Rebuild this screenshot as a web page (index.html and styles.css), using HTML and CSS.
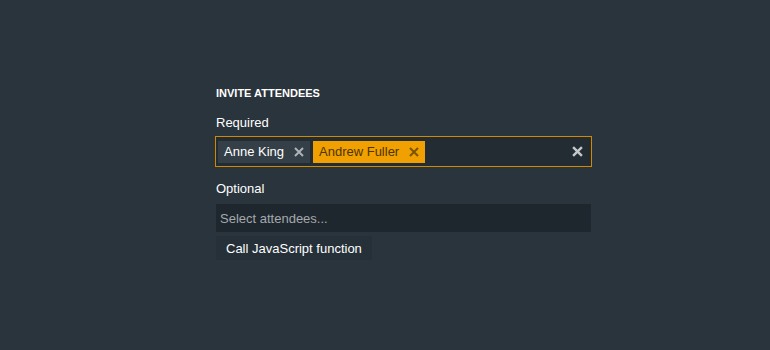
FILE: index.html
```html
<!DOCTYPE html>
<html>
<head>
<meta charset="utf-8">
<link rel="stylesheet" href="styles.css">
</head>
<body>
<div class="panel">
  <div class="title">INVITE ATTENDEES</div>
  <div class="label label-required">Required</div>
  <div class="multi multi-focused">
    <span class="chip">Anne King<svg class="chip-x" viewBox="0 0 10 10" width="10" height="10"><path d="M1 1L9 9M9 1L1 9"/></svg></span>
    <span class="chip chip-active">Andrew Fuller<svg class="chip-x" viewBox="0 0 10 10" width="10" height="10"><path d="M1 1L9 9M9 1L1 9"/></svg></span>
    <span class="spacer"></span>
    <svg class="clear" viewBox="0 0 10 10" width="11" height="11"><path d="M1 1L9 9M9 1L1 9"/></svg>
  </div>
  <div class="label label-optional">Optional</div>
  <div class="multi multi-empty">
    <span class="placeholder">Select attendees...</span>
  </div>
  <button class="btn">Call JavaScript function</button>
</div>
</body>
</html>
```

FILE: styles.css
```css
html, body {
  margin: 0;
  padding: 0;
  background: #2a343c;
  width: 770px;
  height: 350px;
  overflow: hidden;
  font-family: "Liberation Sans", Arial, sans-serif;
}
.panel {
  width: 377px;
  margin: 0 0 0 215px;
  padding-top: 87px;
  display: flex;
  flex-direction: column;
  align-items: flex-start;
}
.title {
  font-size: 11px;
  font-weight: bold;
  color: #ffffff;
  margin-left: 1px;
  line-height: 13px;
}
.label {
  font-size: 13px;
  color: #ffffff;
  margin-left: 1px;
  line-height: 16px;
}
.label-required { margin-top: 15px; }
.label-optional { margin-top: 14px; }
.multi {
  box-sizing: border-box;
  width: 377px;
  display: flex;
  align-items: center;
}
.multi-focused {
  margin-top: 5px;
  height: 31px;
  border: 1px solid #d08a00;
  background: #232c33;
  padding: 0 2px;
  gap: 3px;
}
.chip {
  display: inline-flex;
  align-items: center;
  height: 22px;
  padding: 0 6px 0 6px;
  font-size: 13px;
  color: #ffffff;
  background: #343f47;
}
.chip-x {
  margin-left: 10px;
  stroke: #aeb4b8;
  stroke-width: 2;
  fill: none;
}
.chip-active {
  background: #f0a000;
  color: #4f3500;
}
.chip-active .chip-x { stroke: #7a5400; }
.spacer { flex: 1; }
.clear {
  stroke: #c4c8cb;
  stroke-width: 2.2;
  fill: none;
  margin-right: 6px;
}
.multi-empty {
  margin-top: 7px;
  height: 28px;
  margin-left: 1px;
  width: 375px;
  background: #1f272e;
  padding: 0 4px;
}
.placeholder {
  font-size: 13px;
  color: #a3a9ad;
}
.btn {
  margin-top: 4px;
  margin-left: 1px;
  height: 24px;
  padding: 0 10px;
  border: none;
  background: #263038;
  color: #ffffff;
  font-family: "Liberation Sans", Arial, sans-serif;
  font-size: 13px;
}
```
